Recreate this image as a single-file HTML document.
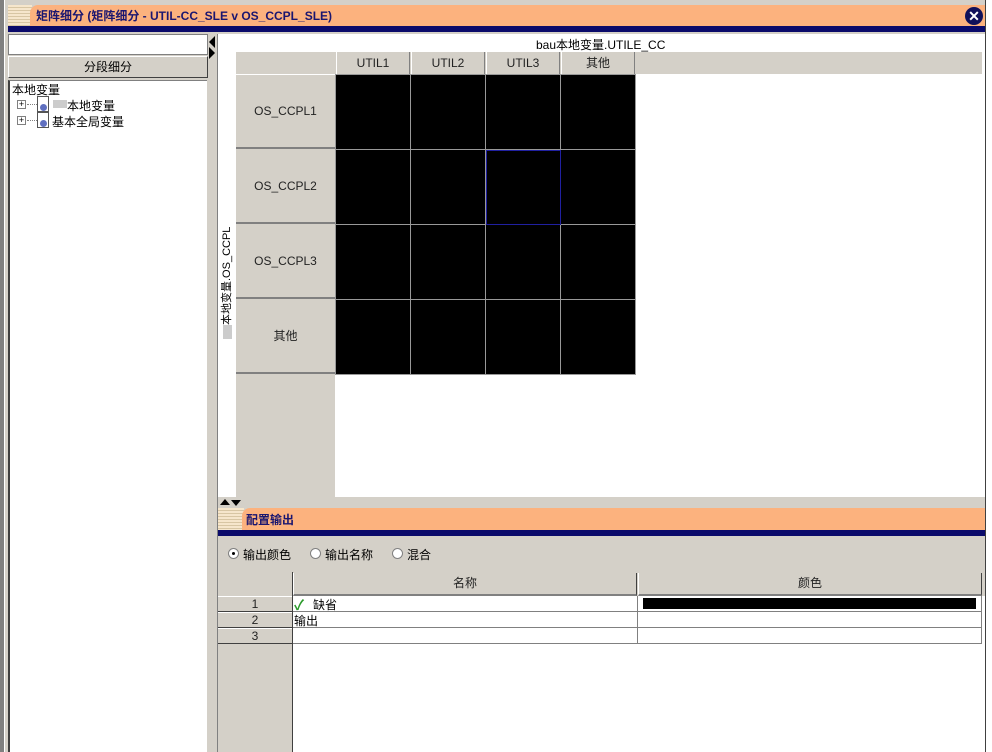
<!DOCTYPE html>
<html><head><meta charset="utf-8"><style>
*{margin:0;padding:0;box-sizing:border-box}
body{width:992px;height:752px;background:#d4d0c8;position:relative;overflow:hidden;font-family:"Liberation Sans","Noto Sans CJK SC",sans-serif;font-size:12px;color:#000}
.a{position:absolute}
.hdr{background:#d4d0c8;text-align:center;color:#222}
.cj{font-family:"Liberation Sans","WenQuanYi Zen Hei","Noto Sans CJK SC",sans-serif}
</style></head><body>
<div class="a" style="left:0;top:0;width:4px;height:752px;background:#808080"></div>
<div class="a" style="left:4px;top:0;width:1px;height:752px;background:#fff"></div>
<div class="a" style="left:8px;top:5px;width:24px;height:22px;background:repeating-linear-gradient(#f6e6cc 0 2px,#d8c6a4 2px 3px)"></div>
<div class="a" style="left:30px;top:5px;width:955px;height:22px;background:#fcb27e;border-radius:8px 0 0 0"></div>
<div class="a cj" style="left:36px;top:7px;font-weight:bold;color:#1a1670;font-size:12px">矩阵细分 (矩阵细分 - UTIL-CC_SLE v OS_CCPL_SLE)</div>
<div class="a" style="left:8px;top:26px;width:977px;height:6px;background:#0a0a6a"></div>
<div class="a" style="left:965px;top:7px;width:18px;height:18px;border-radius:50%;background:#10105a;color:#fff;font-weight:bold;font-size:14px;line-height:18px;text-align:center">✕</div>
<div class="a" style="left:8px;top:34px;width:200px;height:21px;background:#fff;border:1px solid #808080"></div>
<div class="a cj" style="left:8px;top:56px;width:200px;height:22px;background:#d4d0c8;border:1px solid;border-color:#fff #404040 #404040 #fff;text-align:center;line-height:20px;font-size:12px">分段细分</div>
<div class="a" style="left:8px;top:80px;width:199px;height:672px;background:#fff;border-left:2px solid #404040;border-top:1px solid #808080"></div>
<div class="a cj" style="left:12px;top:81px">本地变量</div>
<div class="a" style="left:17px;top:100px;width:9px;height:9px;border:1px solid #808080;background:#fff;font-size:9px;line-height:7px;text-align:center">+</div>
<div class="a" style="left:17px;top:116px;width:9px;height:9px;border:1px solid #808080;background:#fff;font-size:9px;line-height:7px;text-align:center">+</div>
<div class="a" style="left:27px;top:104px;width:10px;border-top:1px dotted #808080"></div>
<div class="a" style="left:27px;top:120px;width:10px;border-top:1px dotted #808080"></div>
<div class="a" style="left:37px;top:96px;width:12px;height:16px;border:1px solid #555;background:#fff"><div class="a" style="left:2px;top:7px;width:7px;height:7px;border-radius:50%;background:#6070c0"></div></div>
<div class="a" style="left:37px;top:112px;width:12px;height:16px;border:1px solid #555;background:#fff"><div class="a" style="left:2px;top:7px;width:7px;height:7px;border-radius:50%;background:#6070c0"></div></div>
<div class="a" style="left:53px;top:100px;width:14px;height:8px;background:#ccc"></div>
<div class="a cj" style="left:67px;top:97px">本地变量</div>
<div class="a cj" style="left:52px;top:113px">基本全局变量</div>
<div class="a" style="left:209px;top:36px;width:0;height:0;border:6px solid transparent;border-right:6px solid #000;border-left:0"></div>
<div class="a" style="left:209px;top:47px;width:0;height:0;border:6px solid transparent;border-left:6px solid #000;border-right:0"></div>
<div class="a" style="left:217px;top:34px;width:1px;height:718px;background:#808080"></div>
<div class="a" style="left:218px;top:34px;width:767px;height:463px;background:#fff"></div>
<div class="a" style="left:536px;top:36px;font-size:12px">bau本地变量.UTILE_CC</div>
<div class="a" style="left:236px;top:52px;width:746px;height:22px;background:#d4d0c8"></div>
<div class="a" style="left:236px;top:75px;width:99px;height:422px;background:#d4d0c8"></div>
<div class="a hdr" style="left:336px;top:52px;width:74px;height:22px;line-height:22px;border-left:1px solid #fff;border-right:1px solid #808080">UTIL1</div>
<div class="a hdr" style="left:411px;top:52px;width:74px;height:22px;line-height:22px;border-left:1px solid #fff;border-right:1px solid #808080">UTIL2</div>
<div class="a hdr" style="left:486px;top:52px;width:74px;height:22px;line-height:22px;border-left:1px solid #fff;border-right:1px solid #808080">UTIL3</div>
<div class="a hdr cj" style="left:561px;top:52px;width:74px;height:22px;line-height:22px;border-left:1px solid #fff;border-right:1px solid #808080">其他</div>
<div class="a hdr" style="left:236px;top:75px;width:99px;height:74px;line-height:72px;border-bottom:2px solid #808080">OS_CCPL1</div>
<div class="a hdr" style="left:236px;top:150px;width:99px;height:74px;line-height:72px;border-bottom:2px solid #808080">OS_CCPL2</div>
<div class="a hdr" style="left:236px;top:225px;width:99px;height:74px;line-height:72px;border-bottom:2px solid #808080">OS_CCPL3</div>
<div class="a hdr cj" style="left:236px;top:300px;width:99px;height:74px;line-height:72px;border-bottom:2px solid #808080">其他</div>
<div class="a" style="left:335px;top:74px;width:301px;height:301px;background:#000;background-image:linear-gradient(90deg,#999 1px,transparent 1px),linear-gradient(#999 1px,transparent 1px);background-size:75px 75px;border-right:1px solid #999;border-bottom:1px solid #999"></div>
<div class="a" style="left:486px;top:150px;width:75px;height:75px;border:1px solid #2020a0"></div>
<div class="a cj" style="left:162px;top:268px;width:130px;height:12px;line-height:12px;font-size:11px;white-space:nowrap;transform:rotate(-90deg);transform-origin:center"><span style="display:inline-block;width:14px;height:9px;background:#ccc;vertical-align:middle"></span>本地变量.OS_CCPL</div>
<div class="a" style="left:220px;top:499px;border:5px solid transparent;border-bottom:6px solid #000;border-top:0"></div>
<div class="a" style="left:231px;top:500px;border:5px solid transparent;border-top:6px solid #000;border-bottom:0"></div>
<div class="a" style="left:218px;top:508px;width:767px;height:244px;background:#d4d0c8"></div>
<div class="a" style="left:218px;top:508px;width:26px;height:22px;background:repeating-linear-gradient(#f6e6cc 0 2px,#d8c6a4 2px 3px)"></div>
<div class="a" style="left:242px;top:508px;width:743px;height:22px;background:#fcb27e;border-radius:8px 0 0 0"></div>
<div class="a cj" style="left:246px;top:511px;font-weight:bold;color:#1a1670">配置输出</div>
<div class="a" style="left:218px;top:530px;width:767px;height:6px;background:#0a0a6a"></div>
<div class="a" style="left:228px;top:548px;width:11px;height:11px;border-radius:50%;background:#fff;border:1px solid #808080"><div class="a" style="left:3px;top:3px;width:3px;height:3px;background:#000;border-radius:50%"></div></div>
<div class="a cj" style="left:243px;top:546px">输出颜色</div>
<div class="a" style="left:310px;top:548px;width:11px;height:11px;border-radius:50%;background:#fff;border:1px solid #808080"></div>
<div class="a cj" style="left:325px;top:546px">输出名称</div>
<div class="a" style="left:392px;top:548px;width:11px;height:11px;border-radius:50%;background:#fff;border:1px solid #808080"></div>
<div class="a cj" style="left:407px;top:546px">混合</div>
<div class="a" style="left:293px;top:596px;width:692px;height:156px;background:#fff"></div>
<div class="a" style="left:292px;top:572px;width:1px;height:180px;background:#404040"></div>
<div class="a hdr cj" style="left:293px;top:573px;width:344px;height:23px;line-height:21px;border-left:1px solid #fff;border-bottom:2px solid #808080;border-right:1px solid #404040">名称</div>
<div class="a hdr cj" style="left:638px;top:573px;width:344px;height:23px;line-height:21px;border-left:1px solid #fff;border-bottom:2px solid #808080;border-right:1px solid #404040">颜色</div>
<div class="a hdr" style="left:218px;top:596px;width:74px;height:16px;line-height:14px;border-bottom:1px solid #404040;border-top:1px solid #fff">1</div>
<div class="a hdr" style="left:218px;top:612px;width:74px;height:16px;line-height:14px;border-bottom:1px solid #404040;border-top:1px solid #fff">2</div>
<div class="a hdr" style="left:218px;top:628px;width:74px;height:16px;line-height:14px;border-bottom:1px solid #404040;border-top:1px solid #fff">3</div>
<div class="a" style="left:293px;top:611px;width:689px;height:1px;background:#808080"></div>
<div class="a" style="left:293px;top:627px;width:689px;height:1px;background:#808080"></div>
<div class="a" style="left:293px;top:643px;width:689px;height:1px;background:#808080"></div>
<div class="a" style="left:637px;top:596px;width:1px;height:48px;background:#808080"></div>
<div class="a" style="left:981px;top:596px;width:1px;height:48px;background:#808080"></div>
<div class="a" style="left:294px;top:595px;color:#2a9a2a;font-size:14px;font-weight:bold">✓</div>
<div class="a cj" style="left:313px;top:596px">缺省</div>
<div class="a cj" style="left:294px;top:612px">输出</div>
<div class="a" style="left:643px;top:598px;width:333px;height:11px;background:#000"></div>
<div class="a" style="left:985px;top:0;width:1px;height:752px;background:#404040"></div>
<div class="a" style="left:986px;top:0;width:6px;height:752px;background:#fff"></div>
</body></html>
